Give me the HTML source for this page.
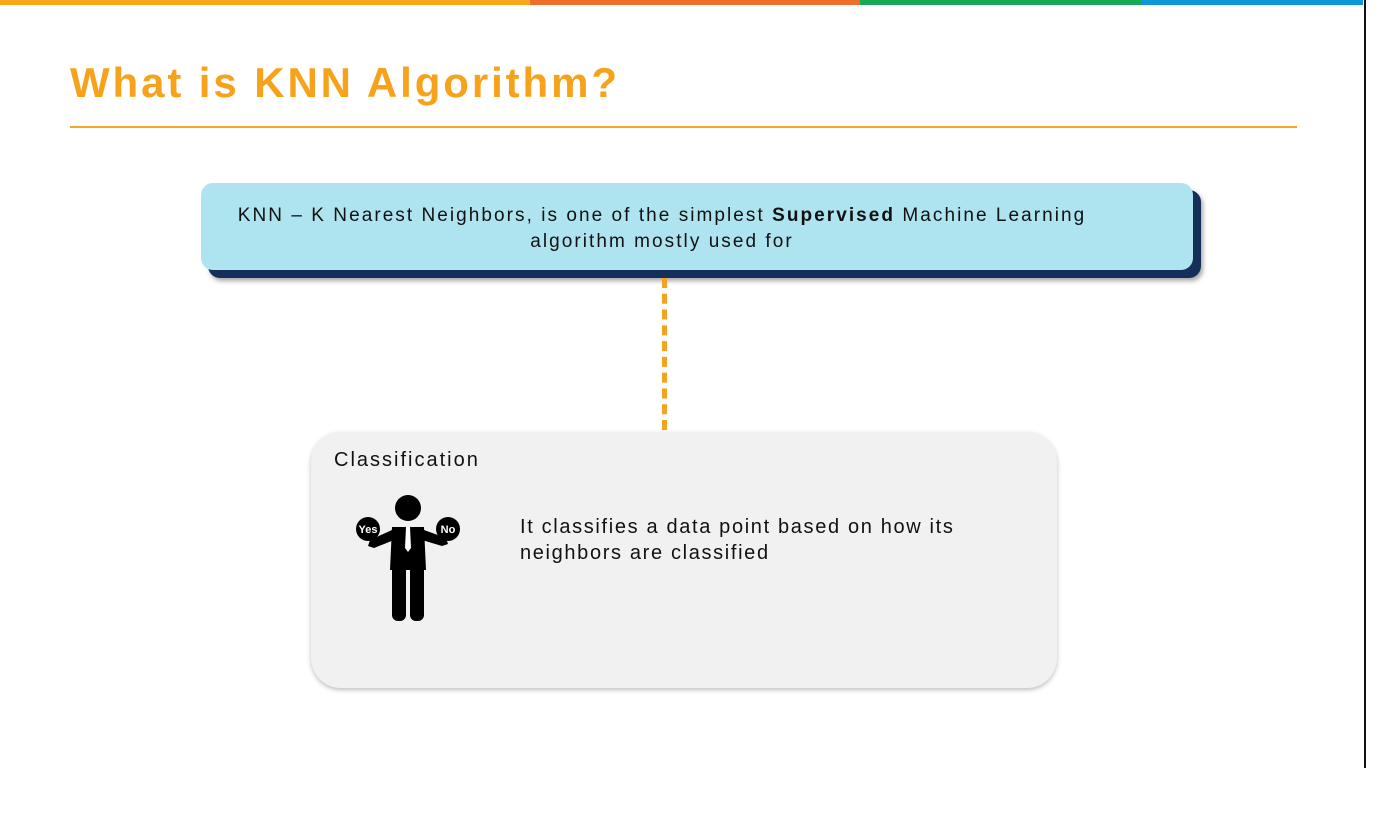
<!DOCTYPE html>
<html><head><style>
body{margin:0;width:1384px;height:840px;background:#fff;position:relative;overflow:hidden;font-family:"Liberation Sans",sans-serif;}
.bar{position:absolute;top:0;height:5px}
h1{position:absolute;left:70px;top:59px;margin:0;font-size:42px;font-weight:bold;color:#f7a21b;letter-spacing:2.9px}
.hr{position:absolute;left:70px;top:126px;width:1227px;height:2px;background:#f5a623}
.vline{position:absolute;left:1364px;top:0;width:2px;height:768px;background:#111}
.shadow{position:absolute;left:208px;top:190px;width:993px;height:88px;background:#14305a;border-radius:12px;box-shadow:2px 3px 5px rgba(0,0,0,.35)}
.blue{position:absolute;left:201px;top:183px;width:992px;height:87px;background:#ade4f0;border-radius:12px;text-align:center;font-size:19px;letter-spacing:2.05px;color:#111;box-sizing:border-box;padding-top:20px;padding-right:70px;line-height:26px}
.dash{position:absolute;left:662px;top:278px;width:0;height:152px;border-left:5px dashed #f7a21b}
.gray{position:absolute;left:311px;top:432px;width:746px;height:256px;background:#f1f1f1;border-radius:30px;box-shadow:0 2px 5px rgba(0,0,0,.25)}
.ct{position:absolute;left:334px;top:449px;font-size:20px;letter-spacing:2px;color:#111}
.txt{position:absolute;left:520px;top:514px;font-size:20px;letter-spacing:1.65px;line-height:26px;color:#111}
</style></head><body>
<div class="bar" style="left:0;width:530px;background:#f8a61c"></div>
<div class="bar" style="left:530px;width:330px;background:#ef6f2a"></div>
<div class="bar" style="left:860px;width:281px;background:#17a85a"></div>
<div class="bar" style="left:1141px;width:222px;background:#0d96d9"></div>
<div class="vline"></div>
<h1>What is KNN Algorithm?</h1>
<div class="hr"></div>
<div class="shadow"></div>
<div class="blue">KNN – K Nearest Neighbors, is one of the simplest <b style="font-weight:600">Supervised</b> Machine Learning<br>algorithm mostly used for</div>
<div class="dash"></div>
<div class="gray"></div>
<div class="ct">Classification</div>
<svg style="position:absolute;left:340px;top:480px" width="140" height="150" viewBox="0 0 140 150">
<circle cx="68" cy="28" r="13" fill="#000"/>
<path d="M52 47 L84 47 L86 90 L50 90 Z" fill="#000"/>
<path d="M52 50 L30 60 L28 66 L34 68 L54 60Z M84 50 L106 58 L108 64 L102 66 L82 60Z" fill="#000"/>
<rect x="52" y="85" width="14" height="56" rx="6" fill="#000"/>
<rect x="70" y="85" width="14" height="56" rx="6" fill="#000"/>
<path d="M66 47 L70 47 L71 68 L68 72 L65 68Z" fill="#fff"/>
<circle cx="28" cy="49" r="12" fill="#000"/>
<circle cx="108" cy="49" r="12" fill="#000"/>
<text x="28" y="53" fill="#fff" font-size="11" font-weight="bold" text-anchor="middle" font-family="Liberation Sans">Yes</text>
<text x="108" y="53" fill="#fff" font-size="11" font-weight="bold" text-anchor="middle" font-family="Liberation Sans">No</text>
</svg>
<div class="txt">It classifies a data point based on how its<br>neighbors are classified</div>
</body></html>
